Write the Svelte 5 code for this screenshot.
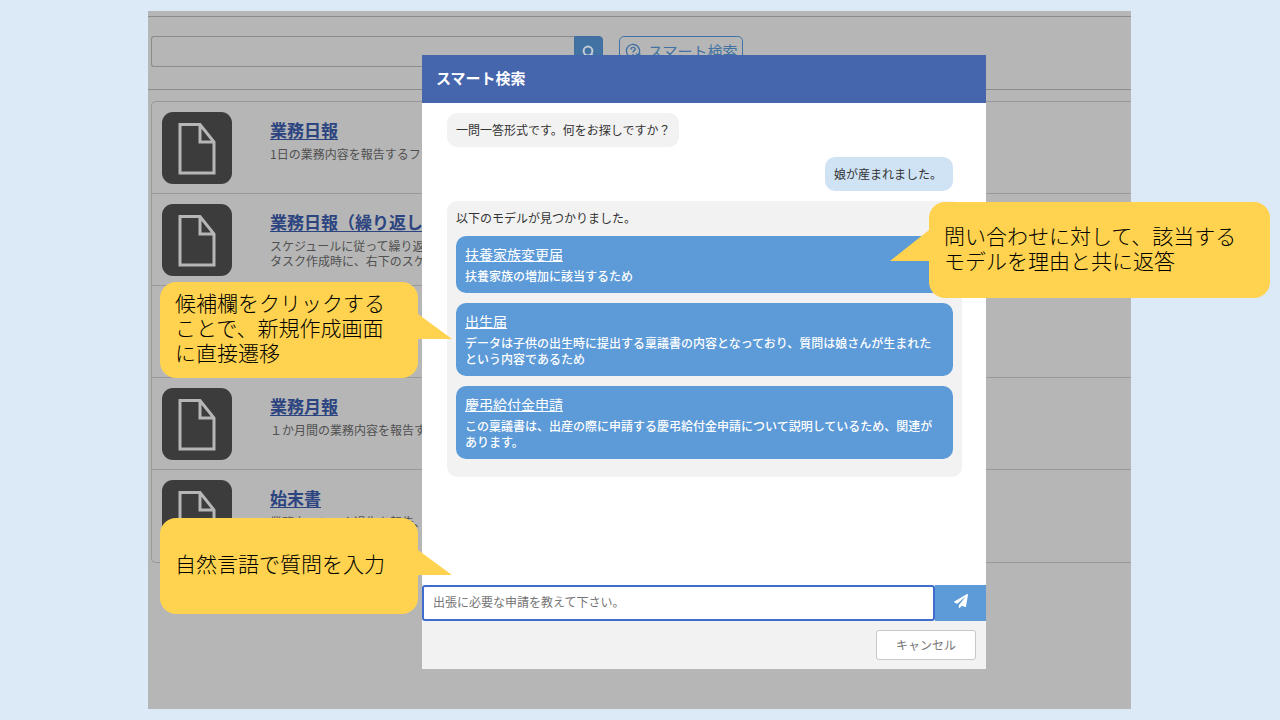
<script>
    const models = [
        {name: '業務日報', lines: ['1日の業務内容を報告するフ']},
        {name: '業務日報（繰り返し', lines: ['スケジュールに従って繰り返', 'タスク作成時に、右下のスケ']},
        {name: '', lines: []},
        {name: '業務月報', lines: ['１か月間の業務内容を報告す']},
        {name: '始末書', lines: ['業務上のミスや過失を報告、']},
    ]

    const results = [
        {name: '扶養家族変更届', reason: '扶養家族の増加に該当するため'},
        {name: '出生届', reason: 'データは子供の出生時に提出する稟議書の内容となっており、質問は娘さんが生まれたという内容であるため'},
        {name: '慶弔給付金申請', reason: 'この稟議書は、出産の際に申請する慶弔給付金申請について説明しているため、関連があります。'},
    ]

    let keyword = $state('')
    let question = $state('')
</script>

<main>
    <div class="screen">
        <div class="toolbar">
            <form class="search">
                <input type="text" aria-label="検索キーワード" bind:value={keyword} />
                <button type="button" aria-label="検索">
                    <svg viewBox="0 0 14 14" width="14" height="14">
                        <circle cx="6" cy="6" r="4.4" />
                        <path d="M9.2 9.2 L12.6 12.6" />
                    </svg>
                </button>
            </form>
            <button class="smart" type="button">
                <svg viewBox="0 0 16 16" width="16" height="16">
                    <path d="M8 14.6 A6.6 6.6 0 1 1 14.4 9.6 L13 12 M11 10.4 L13 12.4 L15.4 10.6" />
                    <path d="M6 6.4 C6 3.6 10.2 3.8 10.2 6.2 C10.2 7.7 8 7.7 8 9.4 M8 11 V12.2" />
                </svg>
                <span>スマート検索</span>
            </button>
        </div>

        <ul class="models">
            {#each models as item, index (index)}
                <li>
                    <svg class="file" viewBox="0 0 70 72" width="70" height="72">
                        <rect width="70" height="72" rx="11" />
                        <path d="M18 12.500 H38 L52 30 V61 H18 Z M38 12.500 V30 H52" />
                    </svg>
                    {#if item.name}
                        <div>
                            <a href="#model">{item.name}</a>
                            {#each item.lines as line (line)}
                                <p>{line}</p>
                            {/each}
                        </div>
                    {/if}
                </li>
            {/each}
        </ul>

        <div class="modal" role="dialog" aria-labelledby="modalTitle">
            <h1 id="modalTitle">スマート検索</h1>
            <div class="chat">
                <p class="bubble">一問一答形式です。何をお探しですか？</p>
                <p class="bubble mine">娘が産まれました。</p>
                <div class="bubble found">
                    <p>以下のモデルが見つかりました。</p>
                    {#each results as result (result.name)}
                        <div class="card">
                            <a href="#result">{result.name}</a>
                            <p>{result.reason}</p>
                        </div>
                    {/each}
                </div>
            </div>
            <form class="ask">
                <input type="text" aria-label="質問" placeholder="出張に必要な申請を教えて下さい。" bind:value={question} />
                <button type="button" aria-label="送信">
                    <svg viewBox="0 0 512 512" width="14" height="14">
                        <path d="M476 3.200 L12.500 270.600 c-18.100 10.400 -15.800 35.600 2.200 43.200 L121 358.400 l287.300 -253.200 c5.500 -4.900 13.300 2.600 8.600 8.300 L176 407 v80.500 c0 23.600 28.500 32.900 42.500 15.800 L282 426 l124.600 52.200 c14.200 6 30.400 -2.900 33 -18.200 l72 -432 C515 7.800 493.300 -6.800 476 3.200 z" />
                    </svg>
                </button>
            </form>
            <footer>
                <button type="button">キャンセル</button>
            </footer>
        </div>

        <aside class="callout reply">
            <p>問い合わせに対して、該当するモデルを理由と共に返答</p>
        </aside>
        <aside class="callout click">
            <p>候補欄をクリックすることで、新規作成画面に直接遷移</p>
        </aside>
        <aside class="callout type">
            <p>自然言語で質問を入力</p>
        </aside>
    </div>
</main>

<style>
    :global(body){
        background-color: #dce9f6;
    }

    main{
        box-sizing: border-box;
        min-height: 100vh;
        display: flex;
        padding: 11px 149px 11px 148px;
        font-family: "Noto Sans CJK JP", sans-serif;
        font-size: 12px;
        line-height: 16px;
        color: #333;
    }

    p, h1, ul{
        margin: 0;
        padding: 0;
    }

    input, button{
        box-sizing: border-box;
        margin: 0;
        font-family: inherit;
        font-size: 12px;
    }

    svg{
        display: block;
    }

    .screen{
        position: relative;
        flex: 1;
        min-width: 0;
        background-color: #b6b6b6;
    }

    .toolbar{
        display: flex;
        align-items: flex-start;
        gap: 16px;
        height: 74px;
        box-sizing: border-box;
        margin-top: 5px;
        padding: 19px 3px 0;
        border-top: 1px solid #8c8c8c;
        border-bottom: 1px solid #8c8c8c;
    }

    .search{
        display: flex;
        width: 452px;
    }

    .search input{
        flex: 1;
        min-width: 0;
        height: 31px;
        border: 1px solid #8c8c8c;
        border-right: none;
        border-radius: 3px 0 0 3px;
        background: none;
    }

    .search button{
        display: flex;
        justify-content: center;
        width: 29px;
        height: 31px;
        padding: 8px 0 0;
        border: 1px solid #3f6f9f;
        border-radius: 0 4px 4px 0;
        background-color: #4172a3;
    }

    .search svg{
        fill: none;
        stroke: #c4cdd6;
        stroke-width: 2;
    }

    .smart{
        display: flex;
        align-items: center;
        gap: 7px;
        width: 124px;
        height: 31px;
        padding: 0 0 2px 5px;
        border: 1px solid #4172a3;
        border-radius: 5px;
        background: none;
        color: #4172a3;
    }

    .smart span{
        font-size: 15px;
        white-space: nowrap;
    }

    .smart svg{
        flex: none;
        fill: none;
        stroke: #4172a3;
        stroke-width: 1.4;
    }

    .models{
        margin: 11px 0 0 3px;
        list-style: none;
        border: 1px solid #999;
        border-right: none;
        border-radius: 5px 0 0 5px;
    }

    .models li{
        display: flex;
        gap: 38px;
        height: 92px;
        box-sizing: border-box;
        padding: 10px 0 0 10px;
        border-bottom: 1px solid #999;
    }

    .models li:last-child{
        border-bottom: none;
    }

    .models a{
        display: block;
        margin: 8px 0 6px;
        font-size: 17px;
        line-height: 20px;
        font-weight: 700;
        color: #2c4480;
        text-underline-offset: 2px;
    }

    .models p{
        color: #505050;
        line-height: 15px;
    }

    .file{
        flex: none;
    }

    .file rect{
        fill: #3c3c3c;
    }

    .file path{
        fill: none;
        stroke: #b6b6b6;
        stroke-width: 3;
    }

    .modal{
        position: absolute;
        top: 44px;
        left: 274px;
        right: 145px;
        display: flex;
        flex-direction: column;
        background-color: #fff;
    }

    .modal h1{
        padding: 13px 14px 15px;
        font-size: 15px;
        line-height: 20px;
        color: #fff;
        background-color: #4565ad;
    }

    .chat{
        display: flex;
        flex-direction: column;
        align-items: flex-start;
        gap: 10px;
        min-height: 482px;
        box-sizing: border-box;
        padding: 10px 24px 10px 25px;
    }

    .bubble{
        padding: 9px;
        border-radius: 10px;
        background-color: #f2f2f2;
    }

    .mine{
        align-self: flex-end;
        margin-right: 9px;
        padding-right: 11px;
        background-color: #cfe3f4;
    }

    .found{
        align-self: stretch;
        padding-bottom: 18px;
    }

    .card{
        margin-top: 10px;
        padding: 9px 12px 9px 9px;
        border-radius: 10px;
        color: #fff;
        background-color: #5c9ad8;
    }

    .card a{
        display: block;
        margin-bottom: 5px;
        font-size: 14px;
        line-height: 18px;
        color: #fff;
    }

    .card p{
        font-weight: 500;
    }

    .ask{
        display: flex;
    }

    .ask input{
        flex: 1;
        min-width: 0;
        height: 36px;
        padding: 0 9px 3px;
        border: 2px solid #3f6ccd;
        border-radius: 3px;
        outline: none;
        background-color: #fff;
    }

    .ask input::placeholder{
        color: #757575;
    }

    .ask button{
        display: flex;
        align-items: center;
        justify-content: center;
        width: 51px;
        height: 36px;
        padding: 0 0 4px;
        border: none;
        background-color: #5c9ad8;
    }

    .ask svg{
        fill: #fff;
    }

    .modal footer{
        display: flex;
        justify-content: flex-end;
        padding: 9px 10px;
        background-color: #f2f2f2;
    }

    .modal footer button{
        width: 100px;
        height: 30px;
        padding: 0 0 2px;
        border: 1px solid #c8c8c8;
        border-radius: 3px;
        color: #777;
        background-color: #fff;
    }

    .callout{
        position: absolute;
        display: flex;
        align-items: center;
        box-sizing: border-box;
        width: 258px;
        height: 96px;
        padding: 0 20px 5px 15px;
        border-radius: 16px;
        font-size: 21px;
        font-weight: 300;
        line-height: 25px;
        color: #000;
        background-color: #ffd34f;
    }

    .callout::after{
        content: '';
        position: absolute;
        top: 32px;
        left: 100%;
        width: 34px;
        height: 25px;
        background-color: #ffd34f;
        clip-path: polygon(0 0, 100% 100%, 0 100%);
    }

    .reply{
        top: 191px;
        right: -139px;
        width: 341px;
    }

    .reply::after{
        top: 28px;
        left: auto;
        right: 100%;
        width: 39px;
        height: 31px;
        clip-path: polygon(100% 0, 100% 100%, 0 100%);
    }

    .click{
        top: 271px;
        left: 12px;
    }

    .type{
        top: 507px;
        left: 12px;
    }
</style>
